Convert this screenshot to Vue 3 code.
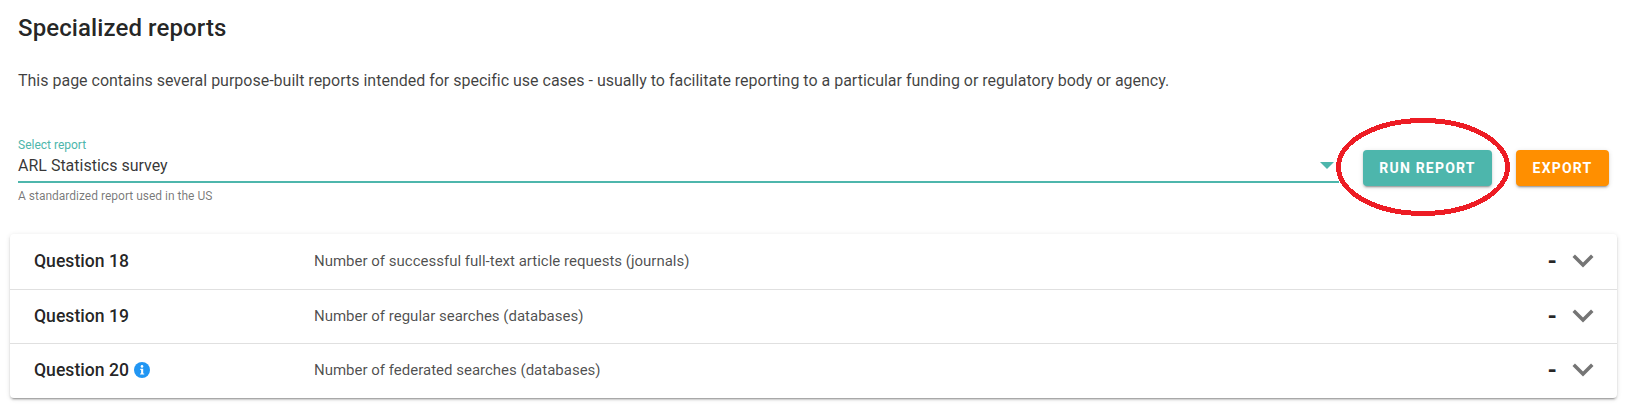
<template>
  <div class="page">
    <h1 class="title">Specialized reports</h1>
    <p class="intro">This page contains several purpose-built reports intended for specific use cases - usually to facilitate reporting to a particular funding or regulatory body or agency.</p>
    <div class="controls">
      <div class="select">
        <div class="select-label">Select report</div>
        <div class="select-value">
          <span>ARL Statistics survey</span>
          <span class="caret"></span>
        </div>
        <div class="select-hint">A standardized report used in the US</div>
      </div>
      <button class="btn teal">Run report</button>
      <button class="btn orange">Export</button>
      <svg class="scribble" width="180" height="104" viewBox="0 0 180 104" shape-rendering="crispEdges">
        <ellipse cx="90" cy="52" rx="84.5" ry="46.5" fill="none" stroke="#ed1c24" stroke-width="5" />
      </svg>
    </div>
    <div class="panels">
      <div v-for="q in questions" :key="q.name" class="panel">
        <div class="q-name">
          <span>{{ q.name }}</span>
          <svg v-if="q.info" class="info" width="16" height="16" viewBox="0 0 16 16">
            <circle cx="8" cy="8" r="8" fill="#2196f3" />
            <circle cx="8" cy="4.4" r="1.3" fill="#fff" />
            <path d="M6.3 6.7h2.9v4.7h1v1.2H6.1v-1.2h1v-3.5h-.8z" fill="#fff" />
          </svg>
        </div>
        <div class="q-desc">{{ q.desc }}</div>
        <div class="q-value">-</div>
        <svg class="chev" width="24" height="24" viewBox="0 0 24 24">
          <path d="M7.41 8.58 12 13.17l4.59-4.59L18 10l-6 6-6-6z" fill="#757575" transform="translate(12 12) scale(1.75) translate(-12 -12.3)" />
        </svg>
      </div>
    </div>
  </div>
</template>

<script setup>
const questions = [
  { name: 'Question 18', desc: 'Number of successful full-text article requests (journals)' },
  { name: 'Question 19', desc: 'Number of regular searches (databases)' },
  { name: 'Question 20', desc: 'Number of federated searches (databases)', info: true }
]
</script>

<style>
html, body { margin: 0; background: #fff; }
</style>

<style scoped>
.page {
  width: 1628px;
  height: 419px;
  overflow: hidden;
  box-sizing: border-box;
  padding: 12px 11px 0 10px;
  font-family: Roboto, sans-serif;
  color: rgba(0, 0, 0, 0.87);
  background: #fff;
}
.title {
  margin: 0 0 0 8px;
  font-size: 24px;
  line-height: 32px;
  font-weight: 500;
  letter-spacing: 0.1px;
}
.intro {
  margin: 25px 0 0 8px;
  font-size: 16px;
  line-height: 24px;
  letter-spacing: -0.005px;
  color: rgba(0, 0, 0, 0.75);
}
.controls {
  position: relative;
  display: flex;
  align-items: flex-start;
  margin: 45px 8px 0 8px;
}
.select { flex: 1; min-width: 0; }
.select-label {
  font-size: 12px;
  line-height: 14px;
  color: #4db6ac;
}
.select-value {
  display: flex;
  justify-content: space-between;
  align-items: center;
  height: 26px;
  padding-bottom: 3px;
  font-size: 16px;
  color: rgba(0, 0, 0, 0.8);
  border-bottom: 2px solid #4db6ac;
  box-sizing: content-box;
}
.caret {
  width: 0;
  height: 0;
  border-left: 7px solid transparent;
  border-right: 7px solid transparent;
  border-top: 7px solid #4db6ac;
  margin-right: 5px;
}
.select-hint {
  margin-top: 7px;
  font-size: 12px;
  line-height: 12px;
  color: rgba(0, 0, 0, 0.54);
}
.btn {
  height: 36px;
  border: 0;
  border-radius: 4px;
  margin-top: 12px;
  font-family: inherit;
  font-size: 14px;
  font-weight: 700;
  letter-spacing: 1.2px;
  text-transform: uppercase;
  color: #fff;
  box-shadow: 0 3px 1px -2px rgba(0,0,0,.2), 0 2px 2px 0 rgba(0,0,0,.14), 0 1px 5px 0 rgba(0,0,0,.12);
}
.teal { width: 129px; margin-left: 24px; background: #4db6ac; }
.orange { width: 93px; margin-left: 24px; background: #ff8f00; }
.scribble { position: absolute; left: 1315px; top: -23px; }
.panels {
  margin-top: 32px;
  border-radius: 4px;
  background: #fff;
  box-shadow: 0 3px 1px -2px rgba(0,0,0,.2), 0 2px 2px 0 rgba(0,0,0,.14), 0 1px 5px 0 rgba(0,0,0,.12);
}
.panel {
  display: flex;
  align-items: center;
  box-sizing: border-box;
  height: 54px;
  padding: 0 22px 1px 24px;
  border-top: 1px solid rgba(0, 0, 0, 0.12);
}
.panel:first-child { border-top: 0; height: 55px; }
.panel:last-child { height: 55px; padding-bottom: 2px; }
.q-name {
  width: 280px;
  flex: none;
  display: flex;
  align-items: center;
  gap: 5px;
  font-size: 17.6px;
  font-weight: 500;
}
.q-desc {
  flex: 1;
  font-size: 15px;
  color: rgba(0, 0, 0, 0.7);
}
.q-value { font-size: 24px; font-weight: 700; margin-right: 14px; }
.chev { flex: none; }
</style>
